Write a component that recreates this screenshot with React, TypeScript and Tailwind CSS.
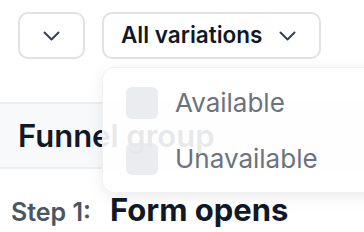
import React from "react";

function Chevron() {
  return (
    <svg width="17" height="10" viewBox="0 0 17 10" fill="none">
      <path d="M1.5 1.5 L8.5 8.5 L15.5 1.5" stroke="#374151" strokeWidth="2" strokeLinecap="round" strokeLinejoin="round" />
    </svg>
  );
}

export default function App() {
  return (
    <div className="relative w-[364px] h-[232px] overflow-hidden bg-white" style={{ fontFamily: "Inter, 'Noto Sans', sans-serif" }}>
      <div className="flex gap-[17px] pl-[18px] pt-[12px]">
        <button className="w-[67px] h-[47px] rounded-[10px] border-2 border-[#dfe2e7] flex items-center justify-center">
          <Chevron />
        </button>
        <button className="w-[219px] h-[47px] rounded-[10px] border-2 border-[#dfe2e7] flex items-center pl-[17px] gap-[17px]">
          <span className="text-[22.5px] font-semibold text-[#111827] leading-none">All variations</span>
          <Chevron />
        </button>
      </div>
      <div className="mt-[43px] h-[67px] bg-[#f8f9fa] border-y-2 border-[#eceef1] flex items-center pl-[18px]">
        <span className="text-[31px] font-semibold text-[#111827] leading-none">Funnel group</span>
      </div>
      <div className="flex items-baseline pl-[11px] pt-[25px]">
        <span className="text-[25px] font-semibold text-[#4b5563] w-[99px] leading-none">Step 1:</span>
        <span className="text-[31px] font-bold text-[#111827] leading-none">Form opens</span>
      </div>
      <div className="absolute left-[102px] top-[67px] w-[300px] h-[126px] rounded-[12px] bg-white/90 shadow-[0_4px_16px_rgba(0,0,0,0.08)] border border-[#f0f1f3] flex flex-col pl-[23px] pt-[19px] gap-[24px]">
        <div className="flex items-center gap-[17px]">
          <div className="w-[32px] h-[32px] rounded-[6px] bg-[#e5e7eb]/80" />
          <span className="text-[26px] text-[#6b7280] leading-none">Available</span>
        </div>
        <div className="flex items-center gap-[17px]">
          <div className="w-[32px] h-[32px] rounded-[6px] bg-[#e5e7eb]/80" />
          <span className="text-[26px] text-[#6b7280] leading-none">Unavailable</span>
        </div>
      </div>
    </div>
  );
}
